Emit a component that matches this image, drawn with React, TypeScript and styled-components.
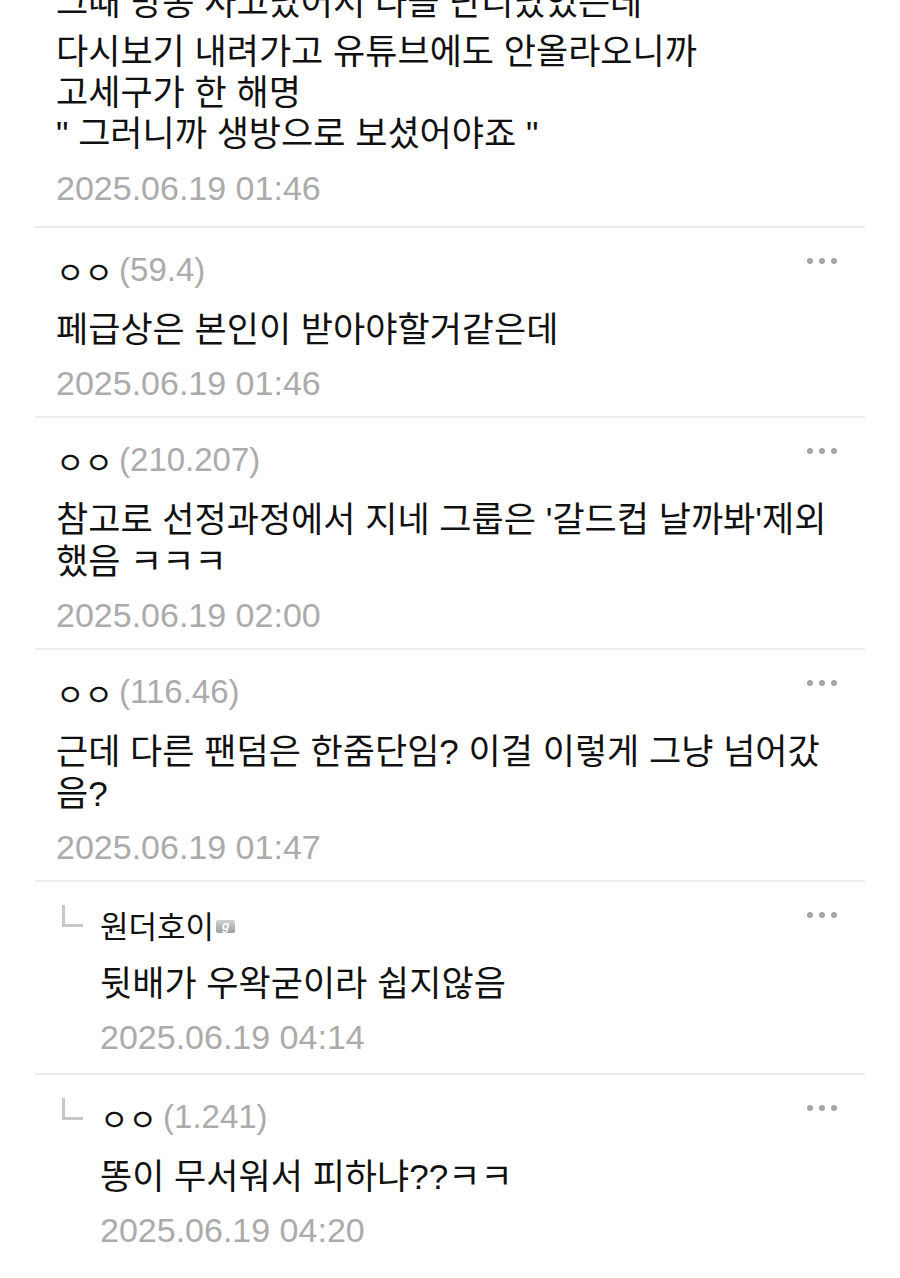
import React from "react";
import styled, { createGlobalStyle } from "styled-components";

const GlobalStyle = createGlobalStyle`
  html, body {
    margin: 0;
    padding: 0;
    background: #ffffff;
  }
  body {
    font-family: "Liberation Sans", "Noto Sans CJK KR", sans-serif;
    color: #111111;
  }
`;

const Page = styled.div`
  width: 900px;
  height: 1278px;
  overflow: hidden;
  background: #ffffff;
`;

const List = styled.div`
  margin: -10px 35px 0 35px;
`;

const Item = styled.div<{ $reply?: boolean }>`
  position: relative;
  display: flex;
  padding: 22px 28px ${(p) => (p.$reply ? "16px" : "13px")} 21px;
  border-bottom: 2px solid #ececec;
  &:first-child {
    padding-top: 0;
    padding-bottom: 18px;
  }
  &:last-child {
    border-bottom: 0;
  }
`;

const ReplyMark = styled.div`
  flex: none;
  width: 44px;
  height: 40px;
  position: relative;
  &::before {
    content: "";
    position: absolute;
    left: 6px;
    top: 1px;
    width: 18px;
    height: 19px;
    border-left: 3px solid #c8c8c8;
    border-bottom: 3px solid #c8c8c8;
  }
`;

const Content = styled.div`
  flex: 1;
  min-width: 0;
`;

const Header = styled.div`
  display: flex;
  align-items: center;
  height: 40px;
`;

const Nick = styled.span`
  font-size: 31px;
  color: #111111;
`;

const Ip = styled.span`
  font-size: 33px;
  color: #ababab;
  margin-left: 6px;
`;

const Badge = styled.span`
  display: inline-flex;
  align-items: center;
  justify-content: center;
  width: 19px;
  height: 13px;
  margin-left: 2px;
  margin-top: 4px;
  border-radius: 2px;
  background: linear-gradient(#d2d2d2, #9c9c9c);
  color: #ffffff;
  font-size: 12px;
  font-style: italic;
  font-weight: bold;
  line-height: 1;
`;

const More = styled.button`
  position: absolute;
  top: 30px;
  right: 28px;
  display: flex;
  gap: 6px;
  padding: 0;
  border: 0;
  background: none;
  span {
    width: 6px;
    height: 6px;
    border-radius: 50%;
    background: #a6a6a6;
  }
`;

/* tail of the previous line, mostly scrolled out of view */
const Clipped = styled.div`
  margin: -8px 0 8px 0;
  font-size: 35px;
  line-height: 41px;
  color: #111111;
`;

const Body = styled.p`
  margin: 19px 0 0 0;
  font-size: 35px;
  line-height: 42px;
  color: #111111;
  ${Item}:first-child & {
    margin-top: 0;
    line-height: 41px;
  }
`;

const Time = styled.div`
  margin-top: 12px;
  font-size: 34px;
  line-height: 40px;
  color: #ababab;
  ${Item}:first-child & {
    margin-top: 14px;
  }
`;

interface CommentData {
  nick: string;
  ip?: string;
  badge?: boolean;
  clipped?: string;
  body: string[];
  time: string;
  reply?: boolean;
}

const comments: CommentData[] = [
  {
    nick: "",
    clipped: "그때 방송 사고났어서 다들 난리났었는데",
    body: [
      "다시보기 내려가고 유튜브에도 안올라오니까",
      "고세구가 한 해명",
      "\" 그러니까 생방으로 보셨어야죠 \"",
    ],
    time: "2025.06.19 01:46",
  },
  {
    nick: "ㅇㅇ",
    ip: "(59.4)",
    body: ["페급상은 본인이 받아야할거같은데"],
    time: "2025.06.19 01:46",
  },
  {
    nick: "ㅇㅇ",
    ip: "(210.207)",
    body: ["참고로 선정과정에서 지네 그룹은 '갈드컵 날까봐'제외", "했음 ㅋㅋㅋ"],
    time: "2025.06.19 02:00",
  },
  {
    nick: "ㅇㅇ",
    ip: "(116.46)",
    body: ["근데 다른 팬덤은 한줌단임? 이걸 이렇게 그냥 넘어갔", "음?"],
    time: "2025.06.19 01:47",
  },
  {
    nick: "원더호이",
    badge: true,
    reply: true,
    body: ["뒷배가 우왁굳이라 쉽지않음"],
    time: "2025.06.19 04:14",
  },
  {
    nick: "ㅇㅇ",
    ip: "(1.241)",
    reply: true,
    body: ["똥이 무서워서 피하냐??ㅋㅋ"],
    time: "2025.06.19 04:20",
  },
];

const Comment: React.FC<{ data: CommentData }> = ({ data }) => {
  const hasHeader = !!data.nick;
  return (
    <Item $reply={data.reply}>
      {data.reply && <ReplyMark />}
      <Content>
        {hasHeader && (
          <Header>
            <Nick>{data.nick}</Nick>
            {data.badge && <Badge>g</Badge>}
            {data.ip && <Ip>{data.ip}</Ip>}
          </Header>
        )}
        {data.clipped && <Clipped>{data.clipped}</Clipped>}
        <Body>
          {data.body.map((line, i) => (
            <React.Fragment key={i}>
              {i > 0 && <br />}
              {line}
            </React.Fragment>
          ))}
        </Body>
        <Time>{data.time}</Time>
      </Content>
      {hasHeader && (
        <More aria-label="more">
          <span />
          <span />
          <span />
        </More>
      )}
    </Item>
  );
};

const App: React.FC = () => {
  return (
    <Page>
      <GlobalStyle />
      <List>
        {comments.map((c, i) => (
          <Comment key={i} data={c} />
        ))}
      </List>
    </Page>
  );
};

export default App;
